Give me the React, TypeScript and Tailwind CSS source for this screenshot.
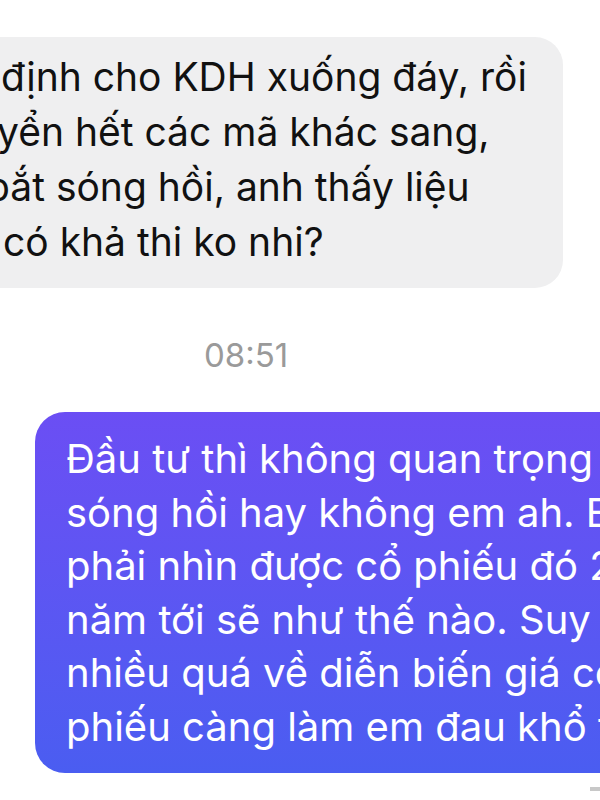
export default function App() {
  const theirs = [
    { text: "định cho KDH xuống đáy, rồi", ml: "ml-[1px]" },
    { text: "yển hết các mã khác sang,", ml: "ml-[-3px]" },
    { text: "bắt sóng hồi, anh thấy liệu", ml: "ml-[-14px]" },
    { text: "có khả thi ko nhi?", ml: "ml-[3px]" },
  ];

  const mine = [
    "Đầu tư thì không quan trọng",
    "sóng hồi hay không em ah. Em",
    "phải nhìn được cổ phiếu đó 2",
    "năm tới sẽ như thế nào. Suy nghĩ",
    "nhiều quá về diễn biến giá cổ",
    "phiếu càng làm em đau khổ thôi",
  ];

  return (
    <div className="w-[600px] h-[800px] overflow-hidden bg-white flex flex-col font-['Inter','Noto_Sans',sans-serif]">
      {/* Incoming bubble, cut off on the left */}
      <div className="mt-[37px] ml-[-40px] w-[603px] h-[251px] shrink-0 rounded-[28px] bg-[#efeff0] pt-[12px] pb-[15px] pl-[40px]">
        {theirs.map((line) => (
          <div key={line.text} className={`${line.ml} whitespace-nowrap text-[39px] leading-[55px] text-[#111]`}>
            {line.text}
          </div>
        ))}
      </div>

      {/* Timestamp */}
      <div className="mt-[50px] pl-[204px] text-[33px] leading-[34px] text-[#9a9a9a]">08:51</div>

      {/* Outgoing bubble, cut off on the right */}
      <div className="mt-[40px] ml-[35px] w-[640px] h-[361px] shrink-0 rounded-[30px] bg-gradient-to-b from-[#6b4ef4] to-[#4a5df1] py-[20px] pl-[31px]">
        {mine.map((line) => (
          <div key={line} className="whitespace-nowrap text-[40px] leading-[53.5px] text-white">
            {line}
          </div>
        ))}
      </div>

      <div className="mt-[14px] self-end w-[10px] h-[4px] bg-[#c8c8c8]" />
    </div>
  );
}
